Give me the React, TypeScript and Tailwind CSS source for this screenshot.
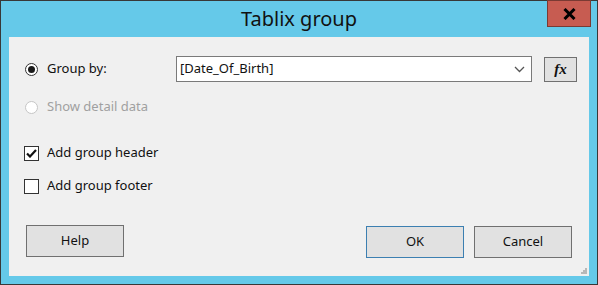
import React from 'react';

const FONT = { fontFamily: '"Noto Sans", "Open Sans", sans-serif' };

function Radio({ checked, disabled }: { checked?: boolean; disabled?: boolean }) {
  return (
    <span
      className={`flex h-[13px] w-[13px] items-center justify-center rounded-full border bg-white ${
        disabled ? 'border-[#c6c6c6]' : 'border-[#333333]'
      }`}
    >
      {checked && <span className="h-[7px] w-[7px] rounded-full bg-[#1a1a1a]" />}
    </span>
  );
}

function Checkbox({ checked }: { checked?: boolean }) {
  return (
    <span className="flex h-[15px] w-[15px] items-center justify-center border border-[#333333] bg-white">
      {checked && (
        <svg width="11" height="9" viewBox="0 0 11 9">
          <path d="M1 4.5 L4 7.5 L10 1" fill="none" stroke="#111" strokeWidth="2.2" />
        </svg>
      )}
    </span>
  );
}

function Btn({ label, primary }: { label: string; primary?: boolean }) {
  return (
    <button
      className={`h-[32px] w-[98px] border bg-[#e1e1e1] text-[13px] text-[#111] ${
        primary ? 'border-[#3c7fb1]' : 'border-[#707070]'
      }`}
    >
      {label}
    </button>
  );
}

export default function App() {
  return (
    <div className="h-[285px] w-[598px] border border-[#383838] bg-[#65c9e9]" style={FONT}>
      <div className="relative flex h-[36px] items-center justify-center">
        <span className="pb-[1px] text-[20px] text-[#111]">Tablix group</span>
        <div className="absolute right-[6px] top-[-1px] flex h-[27px] w-[44px] items-center justify-center border border-[#7a3a33] bg-[#c75c51]">
          <svg width="13" height="12" viewBox="0 0 13 12">
            <path d="M1.5 1 L11.5 11 M11.5 1 L1.5 11" stroke="#000" strokeWidth="3" />
          </svg>
        </div>
      </div>
      <div className="relative mx-[8px] flex h-[239px] flex-col bg-[#f0f0f0] pl-[15px] pr-[10px] text-[13px] text-[#111]">
        <div className="mt-[19px] flex h-[26px] items-center">
          <div className="flex w-[152px] items-center gap-[9px] pl-[1px]">
            <Radio checked />
            <span>Group by:</span>
          </div>
          <div className="flex h-[26px] w-[356px] items-center justify-between border border-[#7a7a7a] bg-white pl-[3px] pr-[6px]">
            <span>[Date_Of_Birth]</span>
            <svg width="11" height="7" viewBox="0 0 11 7">
              <path d="M1 1 L5.5 5.5 L10 1" fill="none" stroke="#555" strokeWidth="1.3" />
            </svg>
          </div>
          <div className="ml-[12px] flex h-[25px] w-[33px] items-center justify-center border border-[#707070] bg-[#e1e1e1]">
            <span className="text-[15px] font-bold italic" style={{ fontFamily: '"Liberation Serif", serif' }}>
              fx
            </span>
          </div>
        </div>
        <div className="mt-[17px] flex h-[16px] items-center gap-[9px] pl-[1px] text-[#a0a0a0]">
          <Radio disabled />
          <span>Show detail data</span>
        </div>
        <div className="mt-[30px] flex h-[16px] items-center gap-[8px]">
          <Checkbox checked />
          <span>Add group header</span>
        </div>
        <div className="mt-[17px] flex h-[16px] items-center gap-[8px]">
          <Checkbox />
          <span>Add group footer</span>
        </div>
        <div className="mt-[31px] flex items-start pl-[2px]">
          <Btn label="Help" />
          <div className="ml-auto flex gap-[10px] pr-[7px] pt-[1px]">
            <Btn label="OK" primary />
            <Btn label="Cancel" />
          </div>
        </div>
        <svg className="absolute bottom-[2px] right-[2px]" width="6" height="6" viewBox="0 0 6 6">
          <rect x="4" y="0" width="2" height="2" fill="#b8b8b8" />
          <rect x="2" y="2" width="2" height="2" fill="#b8b8b8" />
          <rect x="4" y="2" width="2" height="2" fill="#b8b8b8" />
          <rect x="0" y="4" width="2" height="2" fill="#b8b8b8" />
          <rect x="2" y="4" width="2" height="2" fill="#b8b8b8" />
          <rect x="4" y="4" width="2" height="2" fill="#b8b8b8" />
        </svg>
      </div>
    </div>
  );
}
